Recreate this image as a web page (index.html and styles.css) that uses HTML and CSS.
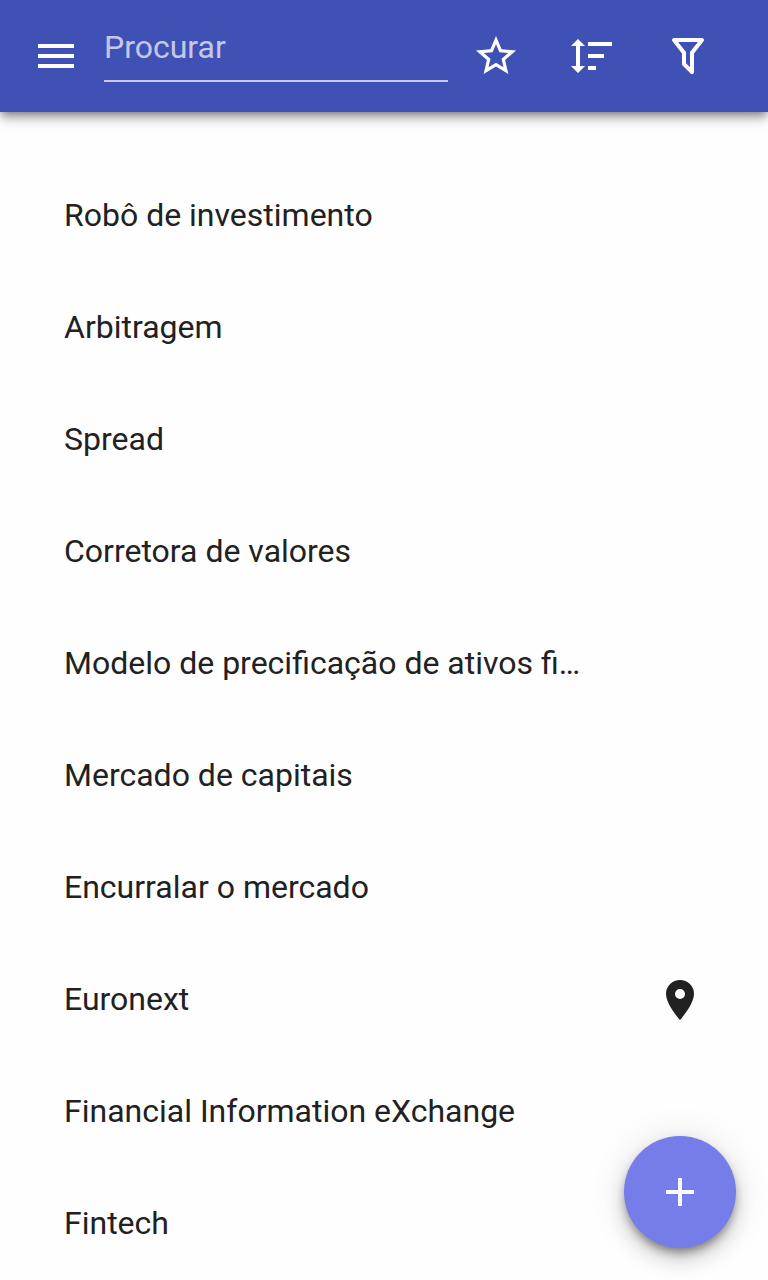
FILE: index.html
```html
<!DOCTYPE html>
<html lang="pt">
<head>
<meta charset="utf-8">
<title>Procurar</title>
<link rel="stylesheet" href="styles.css">
</head>
<body>
<header class="toolbar">
  <button class="icon-button menu" aria-label="Menu"><svg viewBox="0 0 24 24"><path d="M3 6h18v2H3V6m0 5h18v2H3v-2m0 5h18v2H3v-2Z"/></svg></button>
  <div class="search"><span class="placeholder">Procurar</span></div>
  <button class="icon-button star" aria-label="Favoritos"><svg viewBox="0 0 24 24"><path d="M12 15.39l-3.76 2.27.99-4.28-3.32-2.88 4.38-.37L12 6.09l1.71 4.04 4.38.37-3.32 2.88.99 4.28M22 9.24l-7.19-.61L12 2 9.19 8.63 2 9.24l5.45 4.73L5.82 21 12 17.27 18.18 21l-1.64-7.03L22 9.24Z"/></svg></button>
  <button class="icon-button sort" aria-label="Ordenar"><svg viewBox="0 0 24 24"><path d="M10 13v-2h8v2h-8m0 6v-2h4v2h-4m0-12V5h12v2H10M6 17h2.5L5 20.500 1.500 17H4V7H1.500L5 3.500 8.500 7H6v10Z"/></svg></button>
  <button class="icon-button filter" aria-label="Filtrar"><svg viewBox="0 0 24 24"><path d="M15 19.880c.04.3-.06.620-.290.830a.996.996 0 0 1-1.410 0L9.290 16.700a.989.989 0 0 1-.290-.870v-5.120L4.210 4.620a1 1 0 0 1 .170-1.400c.190-.140.400-.220.620-.220h14c.220 0 .430.080.620.220a1 1 0 0 1 .170 1.400L15 10.750v9.130M7.040 5L11 10.060v5.520l2 2v-7.530L16.960 5H7.040Z"/></svg></button>
</header>
<main class="list">
  <div class="row"><span class="label">Robô de investimento</span></div>
  <div class="row"><span class="label">Arbitragem</span></div>
  <div class="row"><span class="label">Spread</span></div>
  <div class="row"><span class="label">Corretora de valores</span></div>
  <div class="row"><span class="label">Modelo de precificação de ativos fi…</span></div>
  <div class="row"><span class="label">Mercado de capitais</span></div>
  <div class="row"><span class="label">Encurralar o mercado</span></div>
  <div class="row"><span class="label">Euronext</span><svg class="pin" viewBox="0 0 24 24"><path d="M12 11.500A2.500 2.500 0 0 1 9.500 9 2.500 2.500 0 0 1 12 6.500 2.500 2.500 0 0 1 14.500 9a2.500 2.500 0 0 1-2.500 2.500M12 2a7 7 0 0 0-7 7c0 5.250 7 13 7 13s7-7.750 7-13a7 7 0 0 0-7-7Z"/></svg></div>
  <div class="row"><span class="label">Financial Information eXchange</span></div>
  <div class="row"><span class="label">Fintech</span></div>
</main>
<button class="fab" aria-label="Adicionar"><svg viewBox="0 0 24 24"><path d="M19 13h-6v6h-2v-6H5v-2h6V5h2v6h6v2Z"/></svg></button>
</body>
</html>
```
FILE: styles.css
```css
* { box-sizing: border-box; }
body {
  margin: 0;
  height: 1280px;
  overflow: hidden;
  position: relative;
  background: #fefefe;
  color: #212121;
  font-family: Roboto, "Liberation Sans", sans-serif;
  font-size: 32px;
}
button { border: 0; padding: 0; background: none; color: inherit; }
svg { display: block; fill: currentColor; }
.toolbar {
  display: flex;
  align-items: center;
  height: 112px;
  padding: 0 32px;
  background: #3f51b5;
  color: #fff;
  box-shadow: 0 4px 8px -2px rgba(0, 0, 0, .4), 0 8px 10px rgba(0, 0, 0, .14), 0 2px 20px rgba(0, 0, 0, .12);
}
.icon-button { width: 48px; height: 48px; flex: none; }
.icon-button svg { width: 48px; height: 48px; }
.search {
  width: 344px;
  height: 54px;
  margin: -2px 24px 0;
  border-bottom: 2px solid rgba(255, 255, 255, .7);
}
.placeholder { display: block; line-height: 38px; color: rgba(255, 255, 255, .7); }
.star { margin-right: 48px; }
.sort { margin-right: 48px; }
.list { padding-top: 48px; }
.row {
  display: flex;
  align-items: center;
  justify-content: space-between;
  height: 112px;
  padding: 0 64px;
}
.label { padding-bottom: 2px; line-height: 48px; white-space: nowrap; }
.pin { width: 48px; height: 48px; }
.fab {
  position: absolute;
  right: 32px;
  bottom: 32px;
  display: grid;
  place-items: center;
  width: 112px;
  height: 112px;
  border-radius: 50%;
  background: #757de8;
  color: #fff;
  box-shadow: 0 6px 10px -2px rgba(0, 0, 0, .4), 0 12px 20px rgba(0, 0, 0, .14), 0 2px 36px rgba(0, 0, 0, .12);
}
.fab svg { width: 48px; height: 48px; }
```
